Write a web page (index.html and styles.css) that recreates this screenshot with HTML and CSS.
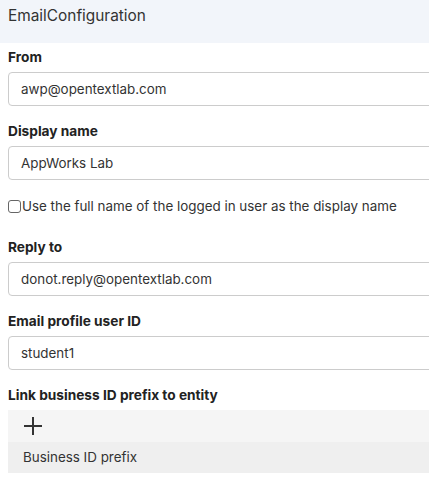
FILE: index.html
```html
<!DOCTYPE html>
<html>
<head>
<meta charset="utf-8">
<link rel="stylesheet" href="styles.css">
</head>
<body>
<div class="page">
  <div class="header">EmailConfiguration</div>
  <div class="form">
    <div class="field">
      <div class="label">From</div>
      <div class="input">awp@opentextlab.com</div>
    </div>
    <div class="field">
      <div class="label">Display name</div>
      <div class="input">AppWorks Lab</div>
    </div>
    <label class="check-row"><span class="checkbox"></span><span class="check-text">Use the full name of the logged in user as the display name</span></label>
    <div class="field">
      <div class="label">Reply to</div>
      <div class="input">donot.reply@opentextlab.com</div>
    </div>
    <div class="field">
      <div class="label">Email profile user ID</div>
      <div class="input">student1</div>
    </div>
    <div class="field">
      <div class="label">Link business ID prefix to entity</div>
      <div class="grid">
        <div class="toolbar">
          <svg class="plus" width="20" height="20" viewBox="0 0 20 20"><path d="M10 1V19M1 10H19" stroke="#333" stroke-width="2" fill="none"/></svg>
        </div>
        <div class="grid-row">Business ID prefix</div>
      </div>
    </div>
  </div>
</div>
</body>
</html>
```
FILE: styles.css
```css
html, body {
  margin: 0;
  padding: 0;
  background: #fff;
  overflow: hidden;
}
body {
  font-family: Inter, "Noto Sans", sans-serif;
  color: #333;
}
.page {
  width: 429px;
}
.header {
  height: 43px;
  background: #f2f5fa;
  font-size: 15.4px;
  line-height: 32px;
  padding-left: 8px;
  color: #333;
}
.form {
  padding: 6px 0 0 8px;
}
.field {
  margin-bottom: 17px;
}
.label {
  font-size: 13.7px;
  font-weight: 700;
  line-height: 16px;
  height: 16px;
  margin-bottom: 7px;
  color: #222;
  white-space: nowrap;
}
.input {
  box-sizing: border-box;
  height: 34px;
  width: 440px;
  border: 1px solid #ccc;
  border-radius: 4px;
  padding: 0 12px;
  font-size: 13.4px;
  line-height: 32px;
  color: #333;
  white-space: nowrap;
}
.check-row {
  display: flex;
  align-items: center;
  height: 18px;
  margin-bottom: 24px;
  font-size: 13.4px;
  white-space: nowrap;
}
.checkbox {
  box-sizing: border-box;
  width: 13px;
  height: 13px;
  border: 1px solid #666;
  border-radius: 3px;
  margin-right: 1px;
  flex: none;
}
.grid {
  width: 421px;
}
.toolbar {
  height: 32px;
  background: #f5f5f5;
  display: flex;
  align-items: center;
  padding-left: 15px;
}
.grid-row {
  height: 31px;
  background: #efefef;
  font-size: 13.4px;
  line-height: 31px;
  padding-left: 15px;
  color: #333;
}
```
